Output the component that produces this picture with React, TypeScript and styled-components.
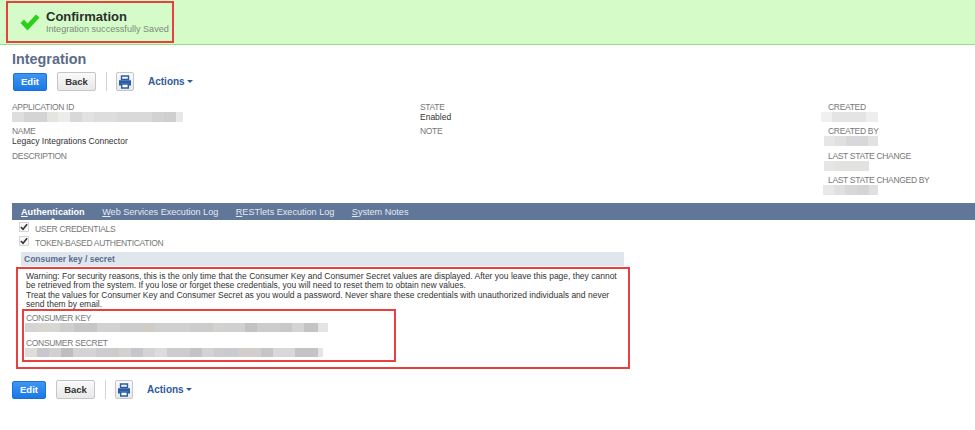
import React from "react";
import styled, { createGlobalStyle } from "styled-components";

const GlobalStyle = createGlobalStyle`
  html, body {
    margin: 0;
    padding: 0;
    background: #fff;
    font-family: "Liberation Sans", Arial, sans-serif;
    overflow: hidden;
  }
`;

const Banner = styled.div`
  height: 43px;
  background: #d5fbc9;
  border-bottom: 1px solid #8ee581;
  padding: 1px 0 0 6px;
  box-sizing: content-box;
`;

const Notice = styled.div`
  width: 168px;
  height: 42px;
  box-sizing: border-box;
  border: 2px solid #e8403f;
  display: flex;
  align-items: center;
  gap: 6px;
  padding-left: 12px;
`;

const NoticeText = styled.div`
  display: flex;
  flex-direction: column;
  white-space: nowrap;
`;

const NoticeTitle = styled.div`
  font-size: 13px;
  line-height: 15px;
  font-weight: 700;
  color: #2b2f2b;
`;

const NoticeSub = styled.div`
  font-size: 9.1px;
  line-height: 11px;
  color: #7d8a7d;
`;

const Page = styled.div`
  padding-top: 5px;
`;

const Title = styled.h1`
  margin: 0 0 3px 12px;
  font-size: 14.4px;
  line-height: 19px;
  font-weight: 700;
  color: #5a6c87;
`;

const Toolbar = styled.div<{ $left: number }>`
  display: flex;
  align-items: center;
  height: 19px;
  padding-left: ${(p) => p.$left}px;
`;

const PrimaryButton = styled.button`
  width: 34px;
  height: 18px;
  padding: 0;
  border: 1px solid #1c6fd8;
  border-radius: 2px;
  background: linear-gradient(#3f95f3, #1a78e6);
  color: #fff;
  font: 700 9.5px "Liberation Sans", Arial, sans-serif;
`;

const SecondaryButton = styled.button`
  width: 39px;
  height: 19px;
  margin-left: 10px;
  padding: 0;
  border: 1px solid #c6c6c6;
  border-radius: 2px;
  background: linear-gradient(#fafafa, #e8e8e8);
  color: #333;
  font: 700 9.5px "Liberation Sans", Arial, sans-serif;
`;

const Divider = styled.span`
  width: 1px;
  height: 19px;
  margin: 0 9px 0 10px;
  background: #d4d4d4;
`;

const IconButton = styled.button`
  width: 18px;
  height: 19px;
  padding: 0;
  display: flex;
  align-items: center;
  justify-content: center;
  border: 1px solid #c6c6c6;
  border-radius: 2px;
  background: linear-gradient(#fafafa, #e8e8e8);
`;

const ActionsMenu = styled.span`
  margin-left: 14px;
  display: flex;
  align-items: center;
  gap: 2px;
  font-size: 10px;
  font-weight: 700;
  color: #2f5a9b;
`;

const Caret = styled.span`
  width: 0;
  height: 0;
  border-left: 3px solid transparent;
  border-right: 3px solid transparent;
  border-top: 3px solid #2f5a9b;
`;

const FieldGrid = styled.div`
  display: grid;
  grid-template-columns: 408px 408px 1fr;
  margin-top: 11px;
  padding-left: 12px;
  height: 101px;
`;

const FieldColumn = styled.div`
  display: flex;
  flex-direction: column;
`;

const Field = styled.div`
  height: 24.3px;
`;

const FieldLabel = styled.div`
  font-size: 8.5px;
  letter-spacing: -0.32px;
  line-height: 10px;
  color: #777;
`;

const FieldValue = styled.div`
  font-size: 8.5px;
  line-height: 10px;
  color: #333;
`;

const Smudge = styled.div<{ $offset?: number; $height?: number }>`
  display: flex;
  height: ${(p) => p.$height ?? 10}px;
  margin-left: ${(p) => p.$offset ?? 0}px;
`;

const SmudgeCell = styled.span<{ $width: number; $color: string }>`
  width: ${(p) => p.$width}px;
  background: ${(p) => p.$color};
`;

const TabBar = styled.div`
  display: flex;
  align-items: center;
  margin-left: 12px;
  height: 17px;
  padding-left: 9px;
  gap: 17.5px;
  background: #607799;
  font-size: 9.1px;
`;

const Tab = styled.span<{ $active?: boolean }>`
  position: relative;
  color: ${(p) => (p.$active ? "#fff" : "#e4e9f1")};
  font-weight: ${(p) => (p.$active ? 700 : 400)};
  ${(p) =>
    p.$active &&
    `&::after {
      content: "";
      position: absolute;
      left: 50%;
      bottom: -4px;
      margin-left: -3px;
      border-left: 3px solid transparent;
      border-right: 3px solid transparent;
      border-bottom: 3px solid #fff;
    }`}
`;

const Checks = styled.div`
  padding-top: 2px;
`;

const CheckRow = styled.div`
  display: flex;
  align-items: flex-start;
  height: 14px;
  padding-left: 19px;
  gap: 6px;
  font-size: 8.5px;
  letter-spacing: -0.32px;
  line-height: 10px;
  color: #777;
`;

const CheckLabel = styled.span`
  padding-top: 2px;
`;

const CheckBox = styled.span`
  width: 10px;
  height: 10px;
  display: flex;
  align-items: center;
  justify-content: center;
  border: 1px solid #d6d6d6;
  box-sizing: border-box;
  background: #f7f7f7;
`;

const Section = styled.div`
  width: 614px;
  margin: 2px 0 0 16px;
`;

const SectionHeader = styled.div`
  margin-left: 5px;
  margin-right: 6px;
  height: 14px;
  padding-left: 3px;
  background: #e0e5ee;
  font-size: 8.5px;
  line-height: 14px;
  font-weight: 700;
  color: #5a7090;
`;

const WarningBox = styled.div`
  margin-top: 1px;
  height: 102px;
  box-sizing: border-box;
  border: 2px solid #e8403f;
  padding: 3px 0 0 4px;
`;

const WarningText = styled.div`
  padding-left: 4px;
  font-size: 8.5px;
  line-height: 9.25px;
  color: #333;
  white-space: nowrap;
`;

const SecretBox = styled.div`
  width: 374px;
  height: 53px;
  box-sizing: border-box;
  border: 2px solid #e8403f;
  padding-top: 2px;
`;

const SecretField = styled.div`
  height: 24.5px;
  padding-left: 1px;
`;

const SecretLabel = styled(FieldLabel)`
  padding-left: 1px;
`;

const FooterBar = styled.div`
  margin-top: 11px;
`;

const appId: [number, string][] = [
  [12, "#dedede"], [23, "#d4d4d4"], [11, "#e4e4e0"], [12, "#ececea"], [12, "#d8d8d8"],
  [12, "#e2e2e2"], [23, "#dddddd"], [35, "#d9d9d9"], [12, "#d2d2d2"], [12, "#cfcfcf"], [7, "#e8e8e8"],
];
const created: [number, string][] = [[11, "#f0f0f0"], [34, "#e4e4e4"], [12, "#eeeeee"]];
const createdBy: [number, string][] = [[11, "#e6e6e6"], [11, "#e0e0e0"], [11, "#d6d8dc"], [11, "#d8d8d8"], [10, "#e2e2e2"]];
const stateChange: [number, string][] = [[11, "#e6e6e6"], [34, "#e2e2e0"]];
const changedBy: [number, string][] = [[11, "#e8e8e8"], [11, "#e0e0e0"], [12, "#d8d8d8"], [12, "#d4d4d4"], [9, "#e0e0e0"]];
const consumerKey: [number, string][] = [
  [12, "#d4d4d4"], [23, "#d8d6d0"], [14, "#cecece"], [23, "#c6c6c6"], [23, "#d2d2d2"], [23, "#cccccc"],
  [12, "#d0ccc4"], [35, "#d0d0d0"], [23, "#cccccc"], [12, "#d4d2ce"], [20, "#d0d0d0"], [12, "#c2c2c2"],
  [23, "#cccccc"], [12, "#c8c8c8"], [12, "#d4d4d4"], [14, "#c4c4c4"], [10, "#e4e4e4"],
];
const consumerSecret: [number, string][] = [
  [12, "#e0dcd8"], [12, "#c8c8cc"], [12, "#d0d0d0"], [12, "#c0bebc"], [23, "#d4d4d6"], [23, "#cccccc"],
  [12, "#d4d2cc"], [12, "#c4c6cc"], [12, "#d4d4d4"], [12, "#dcdcdc"], [23, "#cccccc"], [12, "#c4c4c4"],
  [12, "#d0d4d4"], [12, "#cccccc"], [12, "#c8ccd0"], [23, "#d2cecc"], [12, "#c6c6c6"], [22, "#d8d8d8"],
  [23, "#c4c4c4"], [5, "#e4e4e4"],
];

const Redacted = ({ cells, offset, height }: { cells: [number, string][]; offset?: number; height?: number }) => (
  <Smudge $offset={offset} $height={height}>
    {cells.map(([w, c], i) => (
      <SmudgeCell key={i} $width={w} $color={c} />
    ))}
  </Smudge>
);

const PrinterIcon = () => (
  <svg width="14" height="14" viewBox="0 0 14 14">
    <path d="M3.5 1h7v3.5h-7z" fill="none" stroke="#2a5da6" strokeWidth="1.4" />
    <path d="M1 5.2h12v5.3h-2V8.5H3v2H1z" fill="#2a5da6" />
    <path d="M3.7 9h6.6v4H3.7z" fill="#fff" stroke="#2a5da6" strokeWidth="1.4" />
  </svg>
);

const Tick = () => (
  <svg width="9" height="8" viewBox="0 0 9 8">
    <path d="M1 4l2.4 2.6L8 1" fill="none" stroke="#333" strokeWidth="1.8" />
  </svg>
);

const Buttons = ({ left }: { left: number }) => (
  <Toolbar $left={left}>
    <PrimaryButton>Edit</PrimaryButton>
    <SecondaryButton>Back</SecondaryButton>
    <Divider />
    <IconButton>
      <PrinterIcon />
    </IconButton>
    <ActionsMenu>
      Actions
      <Caret />
    </ActionsMenu>
  </Toolbar>
);

export default function App() {
  return (
    <>
      <GlobalStyle />
      <Banner>
        <Notice>
          <svg width="20" height="17" viewBox="0 0 20 17">
            <path d="M0.5 9L4 5.5 7.5 9.5 16 0.5 19.5 3.5 7.5 16.5z" fill="#2cd01a" />
          </svg>
          <NoticeText>
            <NoticeTitle>Confirmation</NoticeTitle>
            <NoticeSub>Integration successfully Saved</NoticeSub>
          </NoticeText>
        </Notice>
      </Banner>
      <Page>
        <Title>Integration</Title>
        <Buttons left={13} />
        <FieldGrid>
          <FieldColumn>
            <Field>
              <FieldLabel>APPLICATION ID</FieldLabel>
              <Redacted cells={appId} />
            </Field>
            <Field>
              <FieldLabel>NAME</FieldLabel>
              <FieldValue>Legacy Integrations Connector</FieldValue>
            </Field>
            <Field>
              <FieldLabel>DESCRIPTION</FieldLabel>
            </Field>
          </FieldColumn>
          <FieldColumn>
            <Field>
              <FieldLabel>STATE</FieldLabel>
              <FieldValue>Enabled</FieldValue>
            </Field>
            <Field>
              <FieldLabel>NOTE</FieldLabel>
            </Field>
          </FieldColumn>
          <FieldColumn>
            <Field>
              <FieldLabel>CREATED</FieldLabel>
              <Redacted cells={created} offset={-7} />
            </Field>
            <Field>
              <FieldLabel>CREATED BY</FieldLabel>
              <Redacted cells={createdBy} offset={-4} />
            </Field>
            <Field>
              <FieldLabel>LAST STATE CHANGE</FieldLabel>
              <Redacted cells={stateChange} offset={-4} />
            </Field>
            <Field>
              <FieldLabel>LAST STATE CHANGED BY</FieldLabel>
              <Redacted cells={changedBy} offset={-5} />
            </Field>
          </FieldColumn>
        </FieldGrid>
        <TabBar>
          <Tab $active>
            <u>A</u>uthentication
          </Tab>
          <Tab>
            <u>W</u>eb Services Execution Log
          </Tab>
          <Tab>
            <u>R</u>ESTlets Execution Log
          </Tab>
          <Tab>
            <u>S</u>ystem Notes
          </Tab>
        </TabBar>
        <Checks>
          <CheckRow>
            <CheckBox>
              <Tick />
            </CheckBox>
            <CheckLabel>USER CREDENTIALS</CheckLabel>
          </CheckRow>
          <CheckRow>
            <CheckBox>
              <Tick />
            </CheckBox>
            <CheckLabel>TOKEN-BASED AUTHENTICATION</CheckLabel>
          </CheckRow>
        </Checks>
        <Section>
          <SectionHeader>Consumer key / secret</SectionHeader>
          <WarningBox>
            <WarningText>
              Warning: For security reasons, this is the only time that the Consumer Key and Consumer Secret values are
              displayed. After you leave this page, they cannot
              <br />
              be retrieved from the system. If you lose or forget these credentials, you will need to reset them to obtain
              new values.
              <br />
              Treat the values for Consumer Key and Consumer Secret as you would a password. Never share these credentials
              with unauthorized individuals and never
              <br />
              send them by email.
            </WarningText>
            <SecretBox>
              <SecretField>
                <SecretLabel>CONSUMER KEY</SecretLabel>
                <Redacted cells={consumerKey} height={9} />
              </SecretField>
              <SecretField>
                <SecretLabel>CONSUMER SECRET</SecretLabel>
                <Redacted cells={consumerSecret} height={9} />
              </SecretField>
            </SecretBox>
          </WarningBox>
        </Section>
        <FooterBar>
          <Buttons left={12} />
        </FooterBar>
      </Page>
    </>
  );
}
